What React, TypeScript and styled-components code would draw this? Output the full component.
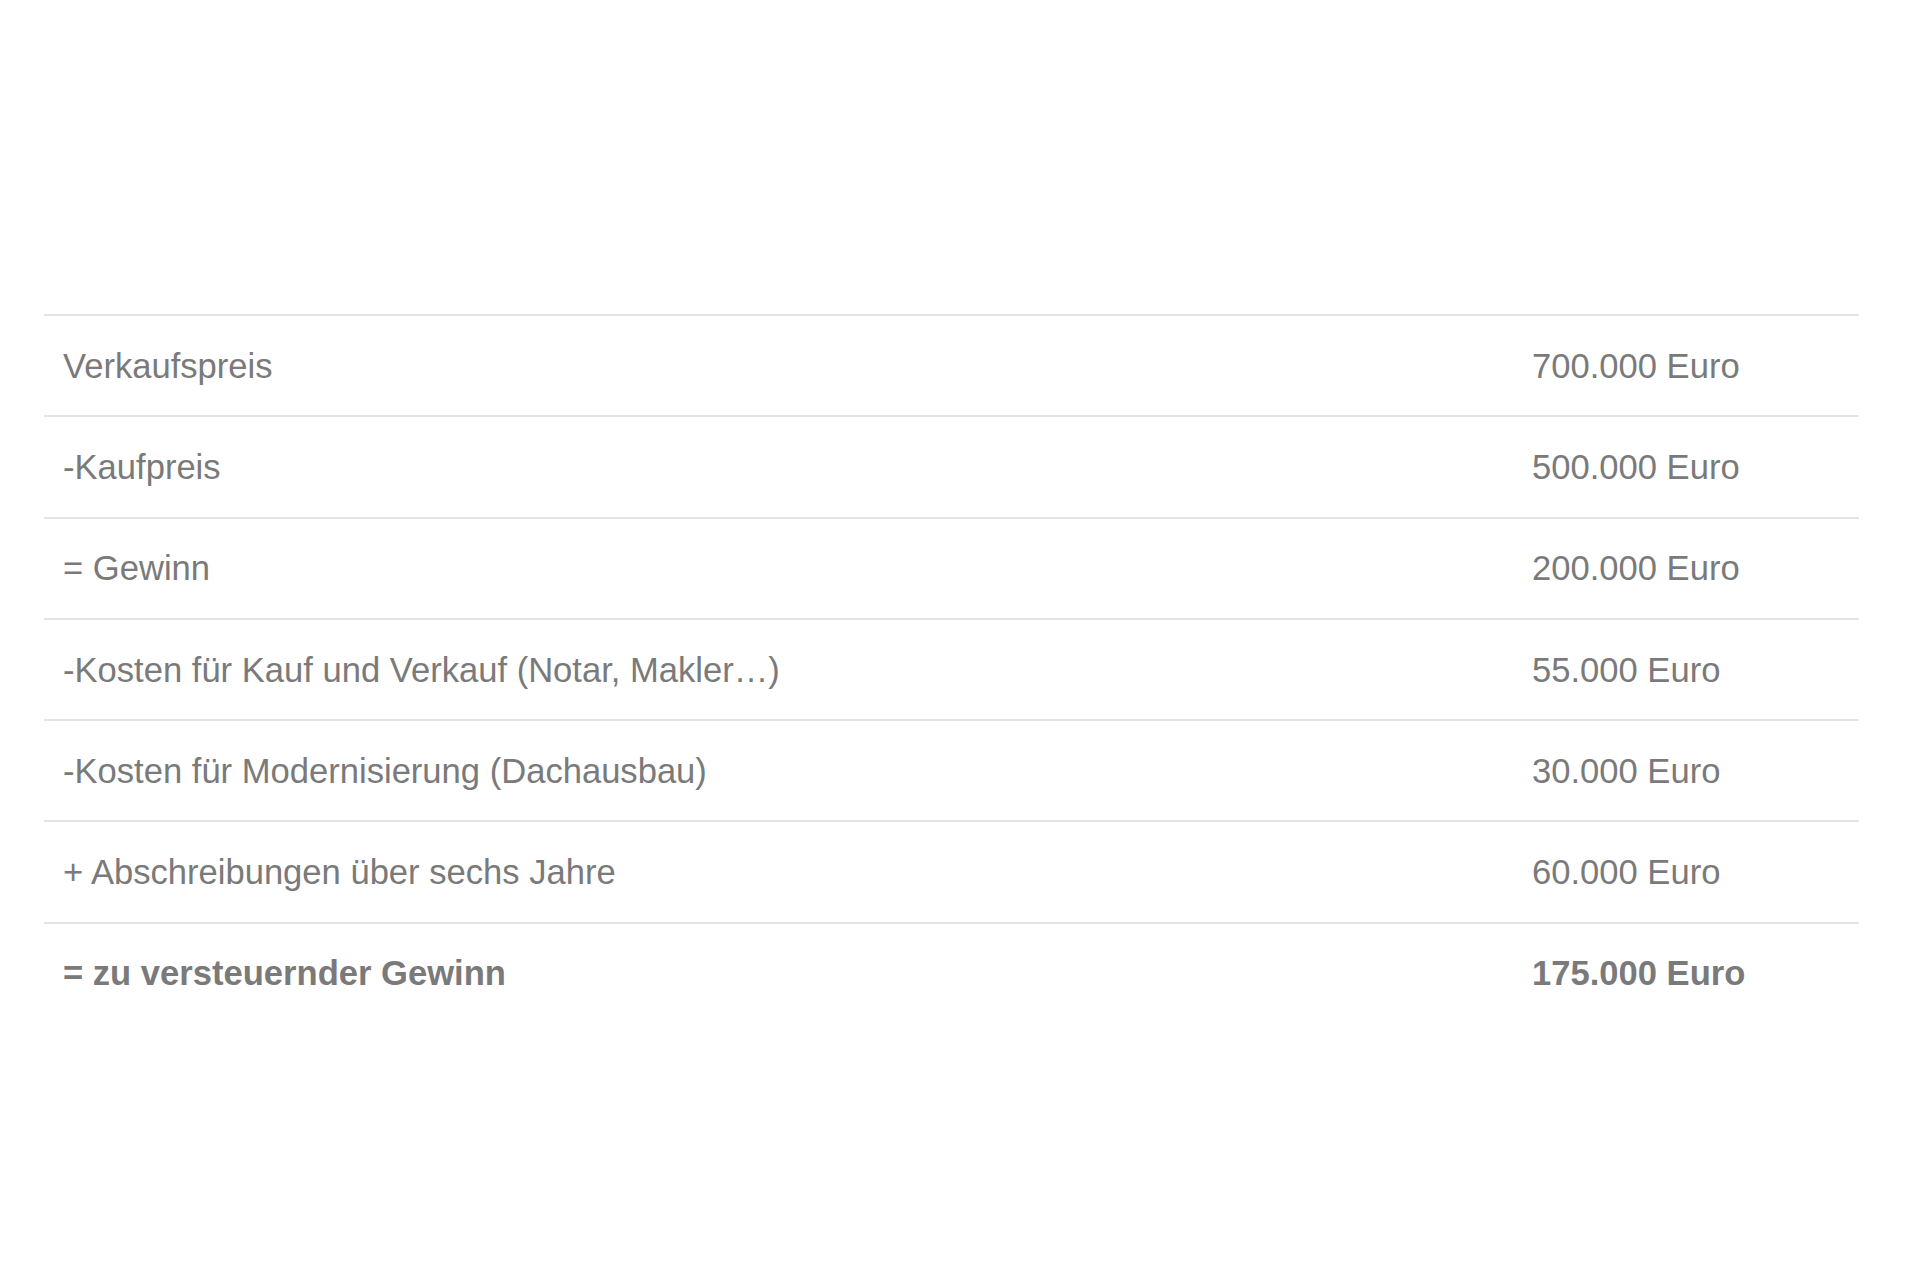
import React from 'react'
import styled, { createGlobalStyle } from 'styled-components'

const GlobalStyle = createGlobalStyle`
body {
    margin: 0;
    background: #ffffff;
    font-family: "Liberation Sans", Arial, sans-serif;
}
`

const Page = styled.div`
width : 1920px;
height : 1265px;
padding : 314px 61px 0 44px;
box-sizing : border-box;
`

const Table = styled.div`
width : 100%;
display : flex;
flex-direction : column;
`

const Row = styled.div<{ last?: boolean }>`
display : grid;
grid-template-columns : 1488px 1fr;
align-items : center;
height : 101.3px;
box-sizing : border-box;
border-top : 2px solid #e4e4e4;
padding-top : 1px;
font-size : 34.6px;
font-weight : ${p => (p.last ? 700 : 400)};
color : #7a7a7a;
`

const Cell = styled.div`
padding : 0 19px;
white-space : nowrap;
`

const ValueCell = styled.div`
padding : 0;
white-space : nowrap;
`

const rows = [
    { label: 'Verkaufspreis', value: '700.000 Euro' },
    { label: '-Kaufpreis', value: '500.000 Euro' },
    { label: '= Gewinn', value: '200.000 Euro' },
    { label: '-Kosten für Kauf und Verkauf (Notar, Makler…)', value: '55.000 Euro' },
    { label: '-Kosten für Modernisierung (Dachausbau)', value: '30.000 Euro' },
    { label: '+ Abschreibungen über sechs Jahre', value: '60.000 Euro' },
    { label: '= zu versteuernder Gewinn', value: '175.000 Euro' },
]

function App() {
    return (
        <>
            <GlobalStyle />
            <Page>
                <Table>
                    {rows.map((r, idx) => (
                        <Row key={idx} last={idx === rows.length - 1}>
                            <Cell>{r.label}</Cell>
                            <ValueCell>{r.value}</ValueCell>
                        </Row>
                    ))}
                </Table>
            </Page>
        </>
    )
}

export default App
